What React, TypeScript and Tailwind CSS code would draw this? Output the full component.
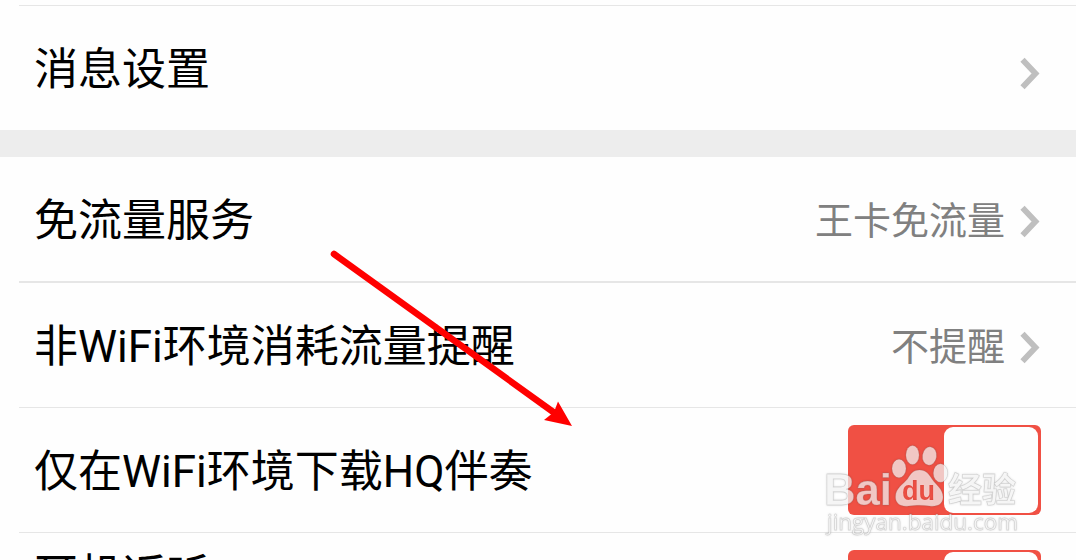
import type { ReactNode } from "react";

function Chevron() {
  return (
    <svg width="20" height="34" viewBox="0 0 20 34" fill="none">
      <path d="M2.500 2.800 15.500 16.500 2.500 30.200" stroke="#bfbfbf" strokeWidth="5.8" />
    </svg>
  );
}

function Toggle() {
  return (
    <div className="flex h-[90px] w-[193px] justify-end rounded-md bg-[#f05044] py-0.5 pr-[3px]">
      <div className="h-full w-[94px] rounded-[9px] bg-[#fefefe]" />
    </div>
  );
}

function Row({
  label,
  raised = false,
  children
}: {
  label: string;
  raised?: boolean;
  children: ReactNode;
}) {
  return (
    <div className="flex h-[124px] shrink-0 items-center justify-between pr-[35px] pl-[34px]">
      <span
        className={`text-[44px] leading-[64px] text-black ${raised ? "mb-[38px]" : "mt-[3px]"}`}
      >
        {label}
      </span>
      {children}
    </div>
  );
}

function ValueLink({ value }: { value?: string }) {
  return (
    <div className="mr-px flex h-[60px] items-center gap-[15px] pt-[5px] text-[38px] leading-[54px] text-[#808080]">
      {value && <span className="-mt-px">{value}</span>}
      <Chevron />
    </div>
  );
}

function Divider() {
  return <div className="ml-[19px] h-px shrink-0 bg-[#e6e6e6]" />;
}

function Watermark() {
  return (
    <svg
      className="absolute top-[435px] left-[820px] drop-shadow-[0_0_1px_rgba(0,0,0,0.2)]"
      width="206"
      height="110"
      viewBox="820 435 206 110"
    >
      <defs>
        <mask id="paw-pad" maskUnits="userSpaceOnUse" x="890" y="460" width="60" height="55">
          <rect x="890" y="460" width="60" height="55" fill="white" />
          <text
            x="902"
            y="500"
            textLength="33"
            lengthAdjust="spacingAndGlyphs"
            className="font-['Liberation_Sans',sans-serif] text-[28px] font-bold"
            fill="black"
          >
            du
          </text>
        </mask>
      </defs>
      <g fill="white" fillOpacity="0.7" stroke="#777777" strokeOpacity="0.25" strokeWidth="0.8">
        <text
          x="824"
          y="505"
          textLength="68"
          lengthAdjust="spacingAndGlyphs"
          className="font-['Liberation_Sans',sans-serif] text-[45px] font-bold"
        >
          Bai
        </text>
        <ellipse cx="899" cy="468.5" rx="7" ry="9.3" />
        <ellipse cx="912.5" cy="455" rx="6.6" ry="9.5" />
        <ellipse cx="929.5" cy="456" rx="7" ry="9.2" transform="rotate(8 929.5 456)" />
        <ellipse cx="940.5" cy="473" rx="7.2" ry="9.2" />
        <path
          mask="url(#paw-pad)"
          d="M919.5 470c-7 0-9.500 5-12 9-4 5-12 9-12 18 0 7 6 10 13 9 8-1 14-1 21 0 8 1 13.500-2 13.500-9 0-8-7-12-11-18-3-4.500-5.500-9-12.500-9Z"
        />
        <text
          x="948"
          y="502"
          textLength="68"
          lengthAdjust="spacingAndGlyphs"
          className="font-['Noto_Sans_CJK_SC',sans-serif] text-[34px] font-bold"
        >
          经验
        </text>
        <text
          x="827"
          y="530"
          textLength="191"
          lengthAdjust="spacingAndGlyphs"
          className="font-['Open_Sans',sans-serif] text-[22px]"
        >
          jingyan.baidu.com
        </text>
      </g>
    </svg>
  );
}

export default function App() {
  return (
    <div className="relative flex h-[560px] w-[1076px] flex-col overflow-hidden bg-[#fefefe] pt-[5px] font-[Roboto,'Noto_Sans_CJK_SC',sans-serif]">
      <Divider />
      <Row label="消息设置">
        <div className="pt-1.5">
          <ValueLink />
        </div>
      </Row>
      <div className="h-[27px] shrink-0 bg-[#ededed]" />
      <Row label="免流量服务">
        <ValueLink value="王卡免流量" />
      </Row>
      <div className="ml-[19px] h-0.5 shrink-0 bg-[#e6e6e6]" />
      <Row label="非WiFi环境消耗流量提醒">
        <ValueLink value="不提醒" />
      </Row>
      <Divider />
      <Row label="仅在WiFi环境下载HQ伴奏">
        <Toggle />
      </Row>
      <Divider />
      <Row label="耳机返听" raised>
        <Toggle />
      </Row>

      <svg className="absolute inset-0" width="1076" height="560" fill="red">
        <path d="M334 254 556 414" stroke="red" strokeWidth="6.5" strokeLinecap="round" />
        <path d="M572 426 558 401.500 554 412 544 420Z" />
      </svg>
      <Watermark />
    </div>
  );
}
